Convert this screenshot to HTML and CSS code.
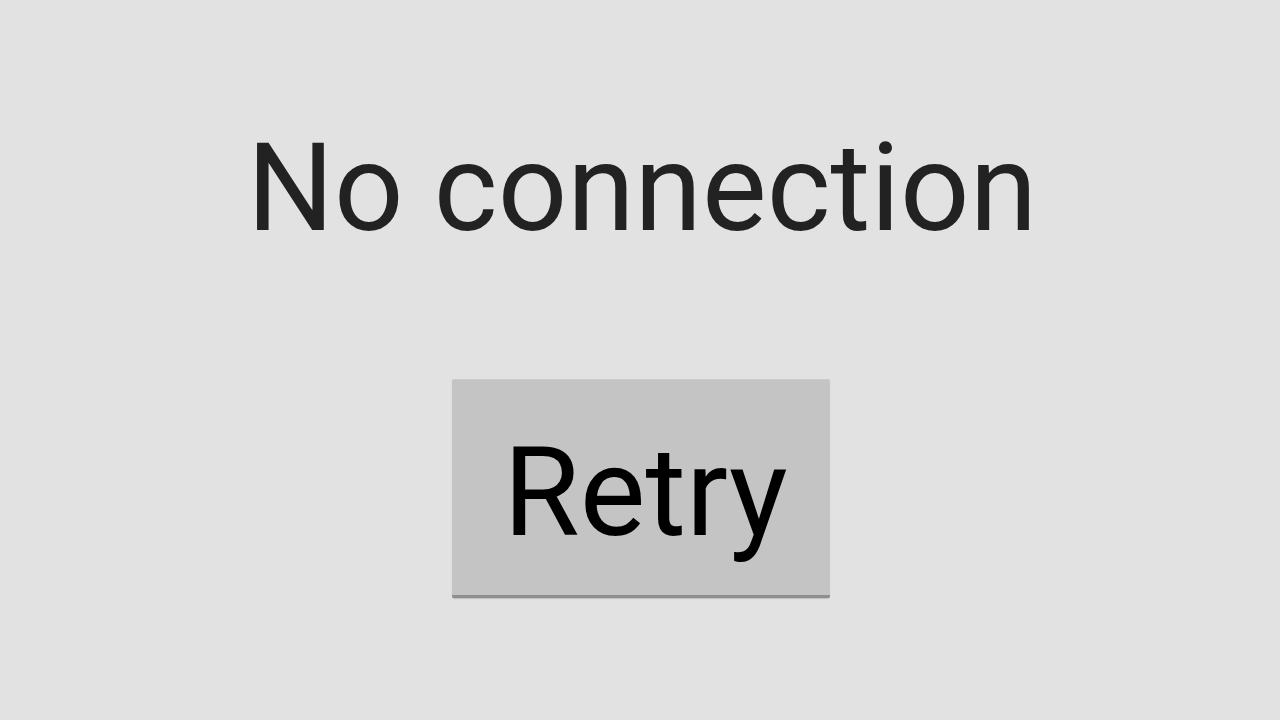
FILE: index.html
```html
<!DOCTYPE html>
<html lang="en">
<head>
    <meta charset="UTF-8">
    <title>No connection</title>
    <link rel="stylesheet" href="styles.css">
</head>
<body>
    <div class="screen">
        <h1 class="message">No connection</h1>
        <button class="retry-button">Retry</button>
    </div>
</body>
</html>
```

FILE: styles.css
```css
/* Reset and base styles */
* {
    margin: 0;
    padding: 0;
    box-sizing: border-box;
}

body {
    background-color: #e2e2e2;
    font-family: 'Roboto', 'Open Sans', sans-serif;
    width: 1280px;
    height: 720px;
    overflow: hidden;
}

.screen {
    display: flex;
    flex-direction: column;
    align-items: center;
    padding-top: 117px;
}

.message {
    font-size: 122px;
    font-weight: normal;
    color: #222222;
    line-height: 143px;
    padding-left: 4px;
}

/* Retry button */
.retry-button {
    margin-top: 119px;
    margin-left: 2px;
    width: 378px;
    height: 219px;
    padding: 10px 0 0 9px;
    background-color: #c4c4c4;
    border: none;
    border-top: 1px dotted #d2d2d2;
    border-bottom: 3px solid #8e8e8e;
    border-radius: 2px;
    box-shadow: 0 1px 1px rgba(0, 0, 0, 0.15);
    font-family: 'Roboto', 'Open Sans', sans-serif;
    font-size: 124px;
    color: #000000;
    line-height: 1;
}
```
